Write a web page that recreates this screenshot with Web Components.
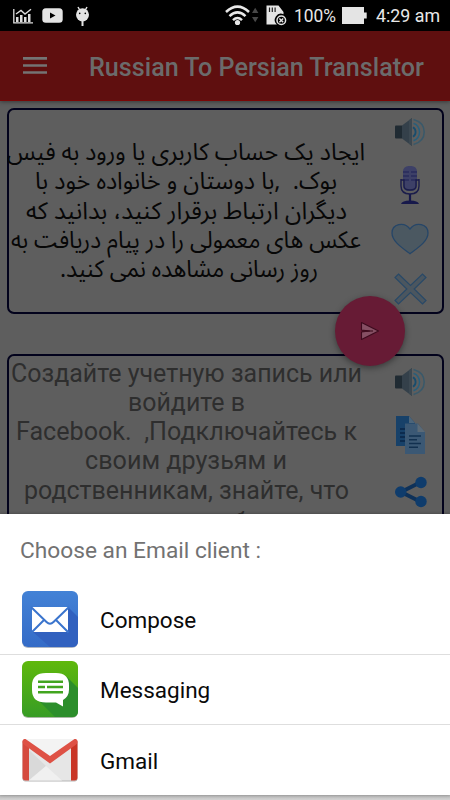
<!DOCTYPE html>
<html lang="en">
<head>
<meta charset="utf-8">
<title>Russian To Persian Translator</title>
<style>
  html, body { margin: 0; height: 100%; }
  body { width: 450px; height: 800px; overflow: hidden; background: #5e5e5e; font-family: Roboto, "Noto Sans", sans-serif; }
</style>
</head>
<body>
<translator-app></translator-app>
<script>
const SPEAKER_ICON = `
  <svg width="32" height="28" viewBox="0 0 32 28">
    <path d="M1 7.5h6v13H1q-1 0-1-1v-11q0-1 1-1z" fill="#202b33"/>
    <path d="M7 7.5L17 0v28L7 20.5z" fill="#34404a"/>
    <path d="M17 0v28l-3-2.3V2.2z" fill="#3c4851"/>
    <g fill="none" stroke-width="1.5">
      <path d="M18 9.2q2.6 1.6 2.6 4.8T18 18.8" stroke="#174d6e" stroke-width="1.8"/>
      <path d="M18.5 5.2q6 2.5 6 8.8t-6 8.8" stroke="#285f7c"/>
      <path d="M18.5 1.5q10.7 3 10.7 12.5t-10.7 12.5" stroke="#39596a"/>
    </g>
  </svg>`;

// Single line of text squeezed or stretched to the given width
class FitText extends HTMLElement {
    constructor() {
        super();
        this.attachShadow({ mode: "open" });
        this.shadowRoot.innerHTML = `
          <style>
            :host { display: flex; flex: none; direction: ltr; }
            span { display: block; flex: none; white-space: pre; transform-origin: 0 50%; }
          </style>
          <span><slot></slot></span>`;
    }

    connectedCallback() {
        const span = this.shadowRoot.querySelector("span");
        const want = Number(this.getAttribute("w"));
        this.style.width = want + "px";
        this.style.direction = "ltr";
        span.style.direction = this.getAttribute("dir") || "ltr";
        const real = span.getBoundingClientRect().width;
        if (want && real) {
            span.style.transform = "scaleX(" + want / real + ")";
        }
    }
}

class StatusBar extends HTMLElement {
    constructor() {
        super();
        this.attachShadow({ mode: "open" });
        this.shadowRoot.innerHTML = `
          <style>
            :host { display: flex; align-items: center; height: 31px; background: #000; color: #e8e8e8; font-size: 18.5px; padding: 0 10px 0 13px; box-sizing: border-box; }
            svg { display: block; flex: none; }
            .gap { flex: 1; }
            fit-text { line-height: 31px; padding-top: 2px; }
          </style>
          <svg width="20" height="16" viewBox="0 0 20 16" style="margin-top:1px">
            <path d="M.8 1v13.8H20" fill="none" stroke="#ddd" stroke-width="1.3"/>
            <path d="M3 9h2.5v5H3zM7 7h2.5v7H7zM11 9h2.5v5H11zM15 6h2.5v8H15z" fill="#ddd"/>
            <path d="M3 6l5-3.5L12 6l6-4.7" fill="none" stroke="#ddd" stroke-width="1.4"/>
          </svg>
          <svg width="21" height="15" viewBox="0 0 21 15" style="margin-left:9px">
            <rect x=".3" y=".3" width="20.4" height="14.4" rx="3.5" fill="#e4e4e4"/>
            <path d="M8 4.5v6l5.5-3z" fill="#000"/>
          </svg>
          <svg width="15" height="21" viewBox="0 0 15 21" style="margin-left:12px;margin-top:1px">
            <path d="M3 1l2 3.5M12 1l-2 3.5" stroke="#e4e4e4" stroke-width="1.5"/>
            <ellipse cx="7.5" cy="8.8" rx="6.5" ry="6.6" fill="#e4e4e4"/>
            <circle cx="4.7" cy="7.4" r=".8"/><circle cx="10.3" cy="7.4" r=".8"/>
            <path d="M7.5 15v5" stroke="#e4e4e4" stroke-width="2"/>
          </svg>
          <div class="gap"></div>
          <svg width="34" height="21" viewBox="0 0 34 21" style="margin-right:7px">
            <g fill="none" stroke="#e8e8e8" stroke-width="2.5">
              <path d="M1 7Q12.5-3.8 24 7"/><path d="M4.5 11.2q8-7.6 16 0"/><path d="M8 15.1q4.5-4.2 9 0"/>
            </g>
            <circle cx="12.5" cy="17.5" r="2.6" fill="#e8e8e8"/>
            <path d="M27 8l3.2-5.3L33.4 8zM27 12h6.4l-3.2 5.3z" fill="#484848"/>
          </svg>
          <svg width="21" height="21" viewBox="0 0 21 21" style="margin-right:7px">
            <path d="M.5.5h12l5 6.5v2.2a6.2 6.2 0 0 0-6.6 10.3H.5z" fill="#e4e4e4"/>
            <path d="M3.5 2.5v4.5M6.3 2.5v4.5M9.1 2.5v4.5" stroke="#222" stroke-width="1.2"/>
            <circle cx="15.3" cy="15.3" r="4.3" fill="#000" stroke="#e4e4e4" stroke-width="1.5"/>
            <path d="M13.4 13.4l3.8 3.8M17.2 13.4l-3.8 3.8" stroke="#e4e4e4" stroke-width="1.4"/>
          </svg>
          <fit-text w="42">100%</fit-text>
          <svg width="25" height="17" viewBox="0 0 25 17" style="margin:0 9px 0 6px"><path d="M0 0h22v5.5h2.7v6H22V17H0z" fill="#e4e4e4"/></svg>
          <fit-text w="64">4:29 am</fit-text>`;
    }
}

class AppBar extends HTMLElement {
    constructor() {
        super();
        this.attachShadow({ mode: "open" });
        this.shadowRoot.innerHTML = `
          <style>
            :host { display: flex; align-items: center; height: 70px; background: #5f0f0f; border-bottom: 1px solid #790606; box-sizing: border-box; padding-left: 23px; box-shadow: 0 1px 4px rgba(0,0,0,.4); color: #6b6b6b; position: relative; }
            fit-text { margin-left: 42px; font-size: 25px; font-weight: 500; line-height: 30px; padding-top: 5px; }
          </style>
          <svg width="24" height="17" viewBox="0 0 24 17"><path d="M0 1.4h24M0 8.5h24M0 15.5h24" stroke="#747474" stroke-width="2.6"/></svg>
          <fit-text w="335">Russian To Persian Translator</fit-text>`;
    }
}

class TextCard extends HTMLElement {
    constructor() {
        super();
        this.attachShadow({ mode: "open" });
        this.shadowRoot.innerHTML = `
          <style>
            :host { display: flex; box-sizing: border-box; width: 437px; border: 2px solid #02021c; border-radius: 7px; }
            .lines { width: 355px; flex: none; display: flex; flex-direction: column; align-items: center; }
            .tools { flex: 1; display: flex; flex-direction: column; align-items: center; padding-left: 2px; }
          </style>
          <div class="lines"><slot></slot></div>
          <div class="tools"><slot name="tool"></slot></div>`;
    }
}

class ChooserRow extends HTMLElement {
    constructor() {
        super();
        this.attachShadow({ mode: "open" });
        this.shadowRoot.innerHTML = `
          <style>
            :host { display: flex; align-items: center; height: 70px; box-sizing: border-box; padding-left: 21px; color: #0a0a0a; }
            :host(:not(:last-child)) { border-bottom: 1px solid #dedede; }
            .icon { width: 58px; height: 58px; margin: 0 21px 2px 0; }
            .label { font-size: 22.5px; line-height: 30px; padding-top: 1px; }
          </style>
          <div class="icon"><slot name="icon"></slot></div>
          <div class="label"><slot></slot></div>`;
    }
}

class TranslatorApp extends HTMLElement {
    constructor() {
        super();
        this.attachShadow({ mode: "open" });
        this.shadowRoot.innerHTML = `
          <style>
            :host { display: block; position: relative; width: 450px; height: 800px; overflow: hidden; background: #5e5e5e; }
            svg { display: block; flex: none; }
            main { display: flex; flex-direction: column; gap: 40px; padding: 7px 0 0 6.5px; }
            .persian { height: 206px; color: #070707; }
            .persian fit-text { font-family: "Noto Sans Arabic", "Noto Naskh Arabic", "DejaVu Sans", sans-serif; font-size: 24px; line-height: 29.3px; height: 29.3px; }
            .persian fit-text:first-child { margin-top: 28px; }
            .persian .last { margin-left: 6px; }
            .russian { height: 206px; color: #2e2e2e; }
            .russian fit-text { font-size: 25px; line-height: 29.3px; height: 29.3px; }
            .russian fit-text:first-child { margin-top: 2.5px; }
            .russian .clipped { margin: 3px 0 0 28px; }
            .fab { position: absolute; left: 335px; top: 296px; width: 70px; height: 70px; border-radius: 50%; background: #671b35; box-shadow: 0 2px 6px rgba(0,0,0,.4); display: flex; align-items: center; justify-content: center; }
            .sheet { position: absolute; left: 0; top: 514px; width: 450px; height: 281px; background: #fff; box-shadow: 0 0 3px rgba(0,0,0,.3); }
            .under { position: absolute; left: 0; top: 795px; width: 450px; height: 5px; background: linear-gradient(#b8b8b8, #d2d2d2); }
            h2 { margin: 0; height: 71px; padding: 20px 0 0 20px; box-sizing: border-box; font-weight: 400; font-size: 22.5px; line-height: 32px; color: #727272; }
          </style>
          <status-bar></status-bar>
          <app-bar></app-bar>
          <main>
            <text-card class="persian">
              <fit-text dir="rtl" w="358">ایجاد یک حساب کاربری یا ورود به فیس</fit-text>
              <fit-text dir="rtl" w="302">بوک.  ,با دوستان و خانواده خود با</fit-text>
              <fit-text dir="rtl" w="321">دیگران ارتباط برقرار کنید، بدانید که</fit-text>
              <fit-text dir="rtl" w="350">عکس های معمولی را در پیام دریافت به</fit-text>
              <fit-text class="last" dir="rtl" w="258">روز رسانی مشاهده نمی کنید.</fit-text>
              <div slot="tool" style="margin:8px 0 0 14px">${SPEAKER_ICON}</div>
              <svg slot="tool" width="20" height="39" viewBox="0 0 20 39" style="margin:20px 0 0 13px">
                <rect x="3" y="0" width="14" height="25" rx="5.5" fill="#3d4067"/>
                <path d="M3 6h6M11 6h6M3 10h6M11 10h6M3 14h6M11 14h6" stroke="#292b5c" stroke-width="1.3"/>
                <path d="M1 13v7q0 8 9 8t9-8v-7M1 14h3v6q0 4 6 4t6-4v-6h3" fill="none" stroke="#1b1d4b" stroke-width="1.4"/>
                <path d="M10 28v8" stroke="#17194b" stroke-width="2.2"/>
                <path d="M1 38q1-3.500 9-3.500t9 3.500z" fill="#17194b"/>
              </svg>
              <svg slot="tool" width="38" height="32" viewBox="0 0 38 32" style="margin:18px 0 0 13px">
                <path d="M19 30.7C10 24 1 18 1 10C1 1 13-2 19 6C25-2 37 1 37 10c0 8-9 14-18 20.700z" fill="#4b5861" stroke="#264668" stroke-width="1.3"/>
              </svg>
              <svg slot="tool" width="33" height="32" viewBox="0 0 33 32" style="margin:18px 0 0 14px">
                <path d="M4.500 1L16.500 12.500 28.500 1l3.500 3.500L20.200 16 32 27.500 28.500 31l-12-11.500L4.500 31 1 27.500 12.800 16 1 4.500z" fill="#4b565f" stroke="#294967" stroke-width="1.2"/>
              </svg>
            </text-card>
            <text-card class="russian">
              <fit-text w="351">Создайте учетную запись или</fit-text>
              <fit-text w="117">войдите в</fit-text>
              <fit-text w="341">Facebook.  ,Подключайтесь к</fit-text>
              <fit-text w="202">своим друзьям и</fit-text>
              <fit-text w="325">родственникам, знайте, что</fit-text>
              <fit-text class="clipped" w="202">вы можете обычно</fit-text>
              <div slot="tool" style="margin:12px 0 0 14px">${SPEAKER_ICON}</div>
              <svg slot="tool" width="29" height="38" viewBox="0 0 29 38" style="margin:20px 0 0 13px">
                <path d="M0 0h13l6 7v23H0z" fill="#174169"/>
                <path d="M13 0v7h6z" fill="#4c657a"/>
                <path d="M4 13h6M4 17h6M4 21h6M4 25h6" stroke="#0a2545" stroke-width="1.3"/>
                <path d="M9 7.500h13l7 8.500v22H9z" fill="#3b5874"/>
                <path d="M21.500 7.500v8.500H29z" fill="#5b6a77"/>
                <path d="M13 20h12M13 23.800h8M13 27.500h12M13 31.300h9" stroke="#12304f" stroke-width="1.500"/>
              </svg>
              <svg slot="tool" width="32" height="32" viewBox="0 0 32 32" style="margin:22px 0 0 14px">
                <path d="M26 6L6 16l20 10" fill="none" stroke="#0e3159" stroke-width="3.800"/>
                <g fill="#0f3c6c"><circle cx="26" cy="6.500" r="5.700"/><circle cx="5.700" cy="16" r="5.700"/><circle cx="26" cy="25.500" r="5.700"/></g>
              </svg>
            </text-card>
          </main>
          <div class="fab">
            <svg width="20" height="20" viewBox="0 0 20 20"><path d="M1.500 1.500L18.500 10 1.500 18.500V11l8-1-8-1z" fill="#865064" stroke="#3c0b1d" stroke-width="1.100" stroke-linejoin="round"/><path d="M2 10h11" stroke="#3c0b1d" stroke-width="1.100"/></svg>
          </div>
          <div class="under"></div>
          <section class="sheet">
            <h2><fit-text w="241">Choose an Email client :</fit-text></h2>
            <div>
            <chooser-row>
              <svg slot="icon" width="58" height="58" viewBox="0 0 58 58">
                <defs><linearGradient id="blue" x2="0" y2="1"><stop stop-color="#4382d6"/><stop offset="1" stop-color="#346bc7"/></linearGradient></defs>
                <rect x="1" y="2" width="56" height="56" rx="6" fill="#aeb6c4"/>
                <rect x="1" y="1" width="56" height="56" rx="6" fill="url(#blue)"/>
                <path d="M47 17l10 10v24q0 6-6 6H29L12 42z" fill="#3161bf"/>
                <path d="M11 17h36v25H11z" fill="#fff"/>
                <path d="M10 17l15.500 15q3.500 3.500 7 0L48 17M10.500 42.500L23 30M47.500 42.500L35 30" fill="none" stroke="#3a74cd" stroke-width="2"/>
              </svg>
              Compose
            </chooser-row>
            <chooser-row>
              <svg slot="icon" width="58" height="58" viewBox="0 0 58 58">
                <defs><linearGradient id="green" x2="0" y2="1"><stop stop-color="#5fb80c"/><stop offset="1" stop-color="#379c25"/></linearGradient></defs>
                <rect x="1" y="2" width="56" height="56" rx="6" fill="#a9b8a4"/>
                <rect x="1" y="1" width="56" height="56" rx="6" fill="url(#green)"/>
                <path d="M46 17l11 11v23q0 6-6 6H34L18 41z" fill="#2c8e2b"/>
                <path d="M25 13h10q13 0 13 12.500v4q0 7-6 10.500v6.500L35 42.500H25Q11 42.500 11 30v-4.500Q11 13 25 13z" fill="#fff"/>
                <path d="M17 21.700h25M17 27h7M26 27h16M17 32.200h25" stroke="#42a51f" stroke-width="2.500"/>
              </svg>
              Messaging
            </chooser-row>
            <chooser-row>
              <svg slot="icon" width="58" height="58" viewBox="0 0 58 58">
                <rect x="1.500" y="10" width="55" height="41.500" rx="3" fill="#b5b5b5"/>
                <rect x="1.500" y="9" width="55" height="41.500" rx="3" fill="#e6e6e6"/>
                <g transform="translate(0 1)">
                  <path d="M4 8h50L29 27z" fill="#f3f3f3"/>
                  <path d="M8 19l17 16-17 14z" fill="#d9d9d9"/>
                  <path d="M8 49.500L25 35l16 14.500z" fill="#f0f0f0"/>
                  <path d="M1.500 11q0-2 2-3L8 12v37.500H4.500q-3 0-3-3z" fill="#d54a3e"/>
                  <path d="M56.500 11q0-2-2-3L50 12v37.500h3.500q3 0 3-3z" fill="#c93526"/>
                  <path d="M1.500 10.500q0-2.500 3-2.500L29 25 53.500 8q3 0 3 2.500 0 2-2 3.500L29 32.500 3.500 14q-2-1.500-2-3.500z" fill="#de5145"/>
                </g>
              </svg>
              Gmail
            </chooser-row>
            </div>
          </section>`;
    }
}

customElements.define("fit-text", FitText);
customElements.define("status-bar", StatusBar);
customElements.define("app-bar", AppBar);
customElements.define("text-card", TextCard);
customElements.define("chooser-row", ChooserRow);
customElements.define("translator-app", TranslatorApp);
</script>
</body>
</html>
